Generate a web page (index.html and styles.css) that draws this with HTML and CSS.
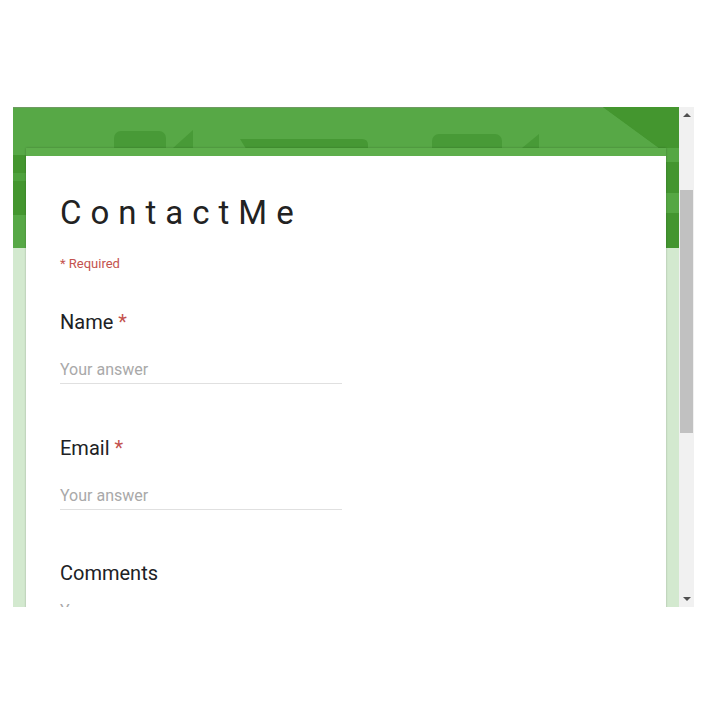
FILE: index.html
```html
<!DOCTYPE html>
<html lang="en">
<head>
    <meta charset="UTF-8">
    <meta name="viewport" content="width=device-width, initial-scale=1.0">
    <title>ContactMe</title>
    <link rel="stylesheet" href="styles.css">
</head>
<body>
    <div class="frame">
        <div class="viewport">
            <svg class="banner" width="666" height="141" viewBox="0 0 666 141">
                <rect x="0" y="0" width="666" height="141" fill="#57a846"/>
                <rect x="0" y="0" width="666" height="1" fill="#6f9a63"/>
                <!-- header shapes -->
                <rect x="101" y="24" width="52" height="40" rx="7" fill="#489a37"/>
                <polygon points="160,41 180,23 180,41" fill="#489a37"/>
                <path d="M227 32 H349 Q355 32 355 38 V45 H235 Z" fill="#469834"/>
                <rect x="419" y="27" width="70" height="40" rx="7" fill="#489a37"/>
                <polygon points="509,41 526,27 526,41" fill="#489a37"/>
                <polygon points="590,0 666,0 666,141 610,141 620,110 646,41" fill="#43952f"/>
                <polygon points="590,0 646,41 666,60 666,0" fill="#44962f"/>
                <!-- left strip -->
                <rect x="0" y="48" width="13" height="18" fill="#44962f"/>
                <rect x="0" y="66" width="13" height="8" fill="#4fa23d"/>
                <rect x="0" y="74" width="13" height="34" fill="#44962f"/>
                <!-- right strip -->
                <rect x="653" y="41" width="13" height="14" fill="#55a743"/>
                <rect x="653" y="86" width="13" height="20" fill="#55a743"/>
            </svg>
            <div class="card">
                <div class="card-body">
                    <h1 class="title">ContactMe</h1>
                    <div class="required-note">* Required</div>

                    <div class="question">
                        <div class="label">Name <span class="star">*</span></div>
                        <div class="answer">Your answer</div>
                    </div>
                    <div class="question">
                        <div class="label">Email <span class="star">*</span></div>
                        <div class="answer">Your answer</div>
                    </div>
                    <div class="question comments">
                        <div class="label">Comments</div>
                        <div class="answer">Your answer</div>
                    </div>
                </div>
            </div>
        </div>
        <div class="scrollbar">
            <div class="arrow"><span class="arrow-up"></span></div>
            <div class="track"><div class="thumb"></div></div>
            <div class="arrow"><span class="arrow-down"></span></div>
        </div>
    </div>
</body>
</html>
```

FILE: styles.css
```css
body {
    margin: 0;
    background: #ffffff;
    font-family: Roboto, "Liberation Sans", Arial, sans-serif;
}
.frame {
    display: flex;
    width: 681px;
    height: 500px;
    margin: 107px 0 0 13px;
    overflow: hidden;
}
.viewport {
    width: 666px;
    height: 500px;
    overflow: hidden;
    background: #d3e9cf;
}
.banner {
    display: block;
}
.card {
    position: relative;
    margin: -100px 13px 0 13px;
    background: #ffffff;
    border-top: 8px solid #5eae4c;
    box-shadow: 0 0 2px rgba(0,0,0,0.25);
}
.card-body {
    padding: 37px 34px 40px 34px;
}
.title {
    margin: 0;
    font-size: 33px;
    line-height: 40px;
    font-weight: 400;
    letter-spacing: 9px;
    color: #222222;
}
.required-note {
    margin-top: 23px;
    font-size: 13px;
    line-height: 16px;
    color: #c4524e;
}
.question {
    padding-top: 38px;
}
.question + .question {
    padding-top: 52px;
}
.comments {
    margin-top: -1px;
}
.label {
    font-size: 20px;
    line-height: 24px;
    color: #202124;
}
.star {
    color: #c4524e;
}
.answer {
    width: 282px;
    margin-top: 26px;
    padding-bottom: 3px;
    font-size: 16px;
    line-height: 20px;
    color: #a9a9a9;
    border-bottom: 1px solid #e0e0e0;
}
.comments .answer {
    margin-top: 16px;
}
.scrollbar {
    width: 15px;
    display: flex;
    flex-direction: column;
    background: #f1f1f1;
}
.arrow {
    height: 16px;
    display: flex;
    align-items: center;
    justify-content: center;
}
.arrow-up {
    border-left: 4px solid transparent;
    border-right: 4px solid transparent;
    border-bottom: 4px solid #505050;
}
.arrow-down {
    border-left: 4px solid transparent;
    border-right: 4px solid transparent;
    border-top: 4px solid #505050;
}
.track {
    flex: 1;
    padding: 67px 1px 0 1px;
}
.thumb {
    height: 243px;
    background: #c1c1c1;
}
```
